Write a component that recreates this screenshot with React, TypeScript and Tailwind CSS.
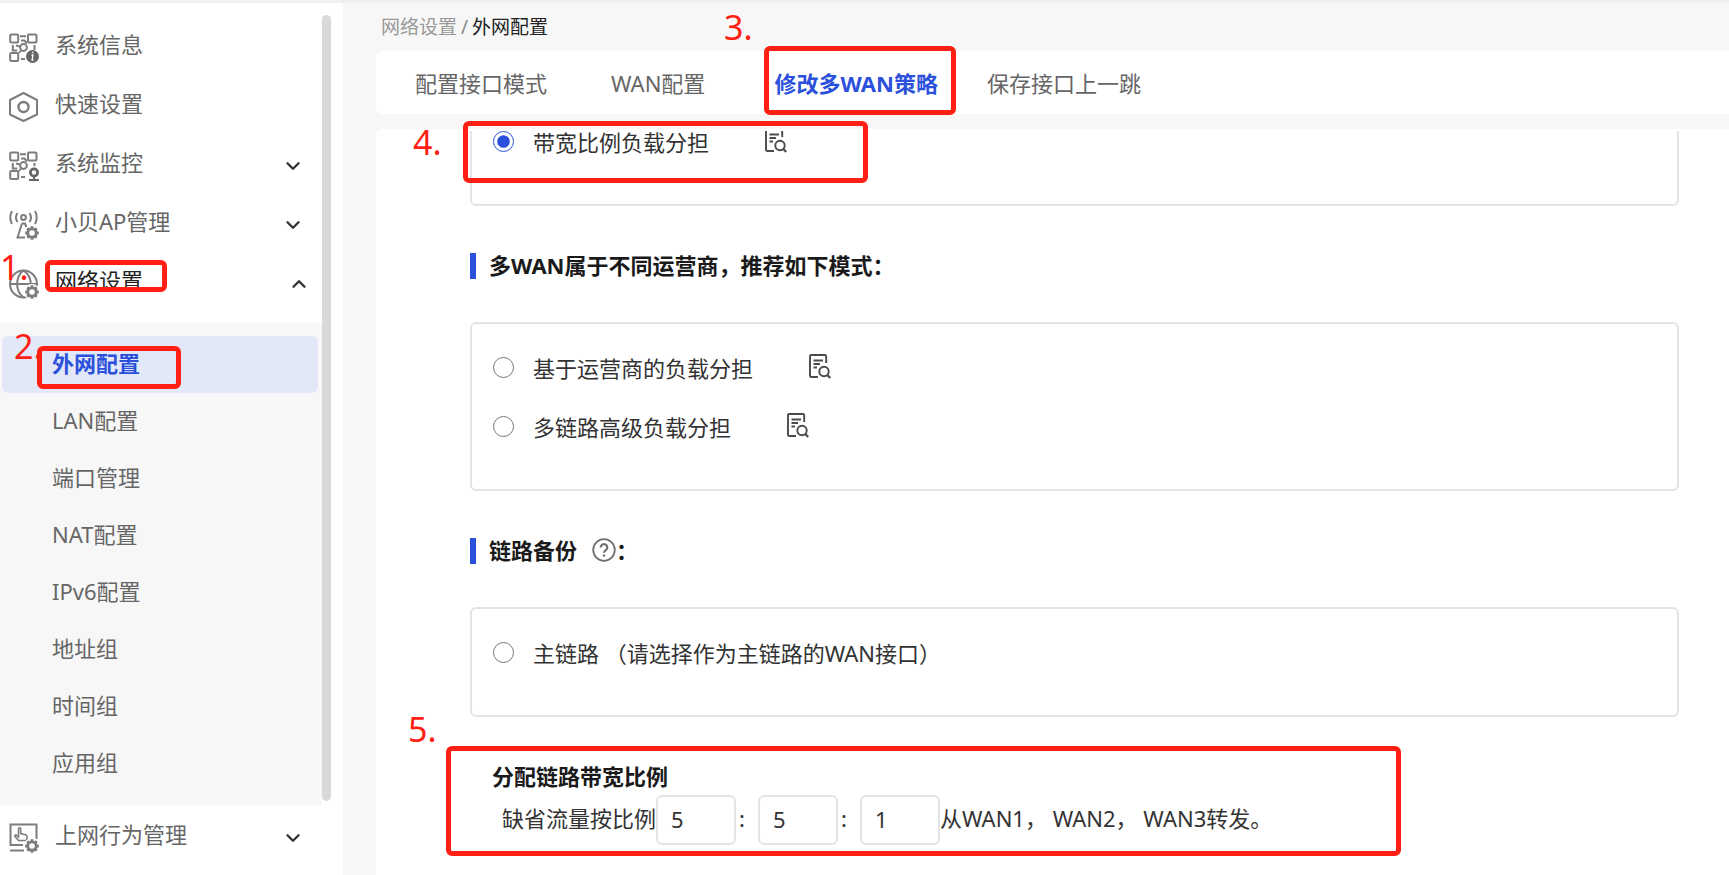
import { useState } from "react";
import type { ReactNode } from "react";
import { ChevronDown, ChevronUp } from "lucide-react";

interface MenuItem {
  label: string;
  icon: ReactNode;
  expandable?: boolean;
}

const GearBadge = () => (
  <g>
    <circle cx="23" cy="23" r="8" fill="#fff" stroke="none" />
    <circle cx="23" cy="23" r="4.2" strokeWidth="2.8" />
    <path
      d="M23 16.2v2M23 27.8v2M16.2 23h2M27.8 23h2M18.3 18.3l1.4 1.4M26.3 26.3l1.4 1.4M18.3 27.7l1.4-1.4M26.3 19.7l1.4-1.4"
      strokeWidth="2.8"
    />
  </g>
);

const GridBase = () => (
  <g>
    <rect x="1.2" y="1.5" width="8" height="8" rx="1" />
    <rect x="19" y="1.5" width="8.5" height="8" rx="1" />
    <rect x="1.2" y="20" width="8" height="8" rx="1" />
    <circle cx="14.5" cy="14.5" r="3.4" />
    <path d="M11 3.2h6M12 7.5h3.5l2.5 3M3.8 12v5.5h4.5M7 12.5l4 1M25.5 12v5M12 26h4M10 20l2-2.5" />
  </g>
);

const MenuIcon = ({ children }: { children: ReactNode }) => (
  <svg
    viewBox="0 0 30 30"
    className="h-[30px] w-[30px] shrink-0"
    fill="none"
    stroke="#7d7d7d"
    strokeWidth="2"
    aria-hidden="true"
  >
    {children}
  </svg>
);

const topItems: MenuItem[] = [
  {
    label: "系统信息",
    icon: (
      <MenuIcon>
        <GridBase />
        <circle cx="23.5" cy="23.5" r="6.5" fill="#666" stroke="none" />
        <path d="M22.5 22h1.4l-.8 5h1.4M23.8 18.8v1.4" stroke="#fff" strokeWidth="1.3" />
      </MenuIcon>
    ),
  },
  {
    label: "快速设置",
    icon: (
      <MenuIcon>
        <path d="M14.5 1 28 8v14.5L14.5 29 1 22.5V8Z" strokeLinejoin="round" />
        <circle cx="14.5" cy="15" r="5" strokeWidth="2.4" />
      </MenuIcon>
    ),
  },
  {
    label: "系统监控",
    expandable: true,
    icon: (
      <MenuIcon>
        <GridBase />
        <circle cx="25" cy="21.5" r="6.5" fill="#fff" stroke="none" />
        <circle cx="25" cy="21.5" r="3.6" stroke="#666" strokeWidth="2.8" />
        <path d="M25 25v4M20 29h10" stroke="#666" strokeWidth="2.2" />
      </MenuIcon>
    ),
  },
  {
    label: "小贝AP管理",
    expandable: true,
    icon: (
      <MenuIcon>
        <circle cx="14.5" cy="7.5" r="2.4" />
        <path d="M8.5 3a8 8 0 0 0 0 9M3 1a14 14 0 0 0 0 13M20.5 3a8 8 0 0 1 0 9M26 1a14 14 0 0 1 0 13" />
        <path d="M13 13.5 8.5 27.5H16M13 13.5h3l1.5 3.5" />
        <GearBadge />
      </MenuIcon>
    ),
  },
  {
    label: "网络设置",
    expandable: true,
    icon: (
      <MenuIcon>
        <circle cx="14.5" cy="15" r="13.5" />
        <path d="M14.5 1.5C6 8 6 22 14.5 28.5M14.5 1.5C21 6 22 12 21.5 16M1 15h27" />
        <GearBadge />
      </MenuIcon>
    ),
  },
];

const behaviourItem: MenuItem = {
  label: "上网行为管理",
  expandable: true,
  icon: (
    <MenuIcon>
      <path d="M14 22H1.5V1.5h26V16M1 27.5h14" />
      <path
        d="M9.5 17.5 6 13.5c-.8-1.4.8-2 1.6-1.2L9.5 14V6c0-1.6 2.2-1.6 2.2 0v4.5l5 1.2c1.3.4 1.6 1.2 1.4 2.3l-.6 3.5Z"
        strokeWidth="1.6"
      />
      <GearBadge />
    </MenuIcon>
  ),
};

const subItems = [
  "外网配置",
  "LAN配置",
  "端口管理",
  "NAT配置",
  "IPv6配置",
  "地址组",
  "时间组",
  "应用组",
];

const tabs = ["配置接口模式", "WAN配置", "修改多WAN策略", "保存接口上一跳"];

const DocSearchIcon = () => (
  <svg
    viewBox="0 0 22 25"
    className="h-[25px] w-[22px]"
    fill="none"
    stroke="#4a4a4a"
    strokeWidth="1.9"
    aria-hidden="true"
  >
    <path d="M17.2 9V2.2A1.2 1.2 0 0 0 16 1H2.2A1.2 1.2 0 0 0 1 2.2v19.6A1.2 1.2 0 0 0 2.2 23H9" />
    <path d="M4.5 6.5H14M4.500 10H11M4.500 13.500H8" />
    <circle cx="15" cy="17.5" r="4.7" />
    <path d="m18.3 21 3 3" strokeWidth="2.2" />
  </svg>
);

const Mark = ({ className, children }: { className: string; children: ReactNode }) => (
  <span
    className={`pointer-events-none absolute z-10 text-[34px] leading-[34px] text-[#ff2013] ${className}`}
  >
    {children}
  </span>
);

const RedBox = ({ className }: { className: string }) => (
  <span
    className={`pointer-events-none absolute z-10 rounded-md border-5 border-[#ff2013] ${className}`}
  />
);

interface MenuRowProps {
  item: MenuItem;
  open?: boolean;
  children?: ReactNode;
}

const MenuRow = ({ item, open, children }: MenuRowProps) => (
  <div className="relative">
    <button
      type="button"
      className={`flex h-[59px] w-full items-center pl-[9px] text-left ${
        open ? "pr-3 text-[#222]" : "pr-[18px] text-[#666]"
      }`}
    >
      {item.icon}
      <span className="ml-4 flex-1 pb-2">{item.label}</span>
      {item.expandable &&
        (open ? (
          <ChevronUp size={22} strokeWidth={2.6} color="#333" />
        ) : (
          <ChevronDown size={22} strokeWidth={2.6} color="#333" />
        ))}
    </button>
    {children}
  </div>
);

interface PolicyOptionProps {
  value: string;
  label: string;
  selected: string;
  onSelect: (value: string) => void;
  preview?: boolean;
}

const PolicyOption = ({ value, label, selected, onSelect, preview }: PolicyOptionProps) => (
  <div className="flex h-[59px] items-center">
    <input
      type="radio"
      id={value}
      name="policy"
      checked={selected === value}
      onChange={() => onSelect(value)}
      className="h-[21px] w-[21px] accent-[#2b50db]"
    />
    <label htmlFor={value} className="pl-[19px] leading-5">
      {label}
    </label>
    {preview && (
      <button type="button" aria-label={`${label} 详情`} className="ml-14 pb-[3px]">
        <DocSearchIcon />
      </button>
    )}
  </div>
);

const OptionGroup = ({ children }: { children: ReactNode }) => (
  <div className="rounded-md border-2 border-[#e4e4e4] pt-[14px] pb-[33px] pl-[21px]">
    {children}
  </div>
);

const SectionTitle = ({ children }: { children: ReactNode }) => (
  <h2 className="mt-[47px] mb-[43px] flex h-[26px] items-center border-l-[6px] border-[#2b50db] pb-0.5 pl-[13px] font-bold text-[#1a1a1a]">
    {children}
  </h2>
);

const App = () => {
  const [policy, setPolicy] = useState("bandwidth");
  const [ratios, setRatios] = useState(["5", "5", "1"]);

  const updateRatio = (index: number, value: string) => {
    setRatios((prev) => prev.map((ratio, i) => (i === index ? value : ratio)));
  };

  return (
    <div
      lang="zh-CN"
      className="flex h-screen overflow-hidden border-t-[3px] border-[#f0f0f0] bg-[#f7f7f7] font-['Noto_Sans','Noto_Sans_CJK_SC',sans-serif] text-[22px] leading-[30px] text-[#333]"
    >
      <aside className="relative w-[343px] shrink-0 bg-white pt-[15px] pr-[21px]">
        {topItems.map((item) => (
          <MenuRow key={item.label} item={item} open={item.label === "网络设置"}>
            {item.label === "网络设置" && (
              <>
                <Mark className="-top-1 left-0">1.</Mark>
                <RedBox className="top-[6px] left-[45px] h-8 w-[122px]" />
              </>
            )}
          </MenuRow>
        ))}
        <nav className="mt-[10px] bg-[#f7f7f7] py-[13px]">
          {subItems.map((label, index) => (
            <div key={label} className="relative pr-1 pl-0.5">
              <a
                href="#"
                className={`flex h-[57px] items-center rounded-md pb-[3px] pl-[50px] ${
                  index === 0 ? "bg-[#e3e8f8] font-bold text-[#2b50db]" : "text-[#666]"
                }`}
              >
                {label}
              </a>
              {index === 0 && (
                <>
                  <Mark className="-top-[7px] left-[14px]">2.</Mark>
                  <RedBox className="top-[10px] left-[37px] h-[43px] w-36" />
                </>
              )}
            </div>
          ))}
        </nav>
        <div className="pt-[3px]">
          <MenuRow item={behaviourItem} />
        </div>
        <div className="absolute top-3 right-3 bottom-[74px] w-[9px] rounded-full bg-[#d9d9d9]" />
      </aside>

      <main className="flex min-w-0 flex-1 flex-col pl-[33px]">
        <div className="relative flex h-12 items-center pl-[5px] text-[19px]">
          <a href="#" className="text-[#999]">
            网络设置
          </a>
          <span className="px-1 text-[#888]">/</span>
          <span className="text-[#222]">外网配置</span>
          <Mark className="top-[7px] left-[348px]">3.</Mark>
        </div>

        <div className="flex h-[63px] items-center gap-16 rounded-l-md bg-white pl-[39px]">
          {tabs.map((tab, index) => (
            <div key={tab} className={index === 2 ? "relative -mr-5 px-[5px]" : ""}>
              <button
                type="button"
                className={index === 2 ? "font-bold text-[#2b50db]" : "text-[#666]"}
              >
                {tab}
              </button>
              {index === 2 && <RedBox className="-top-[22px] -right-[13px] -left-[5px] h-[69px]" />}
            </div>
          ))}
        </div>

        <div className="relative mt-[15px] min-h-0 flex-1 rounded-tl-md bg-white pt-0.5">
          <Mark className="-top-[4px] left-[37px]">4.</Mark>
          <RedBox className="-top-2 left-[87px] h-[62px] w-[405px]" />

          <div className="h-full overflow-hidden pr-[50px] pl-[94px]">
            {/* scrolled so the first group starts above the visible area */}
            <div className="-mt-[35px]">
              <OptionGroup>
                <PolicyOption
                  value="bandwidth"
                  label="带宽比例负载分担"
                  selected={policy}
                  onSelect={setPolicy}
                  preview
                />
              </OptionGroup>
            </div>

            <SectionTitle>多WAN属于不同运营商，推荐如下模式：</SectionTitle>
            <OptionGroup>
              <PolicyOption
                value="isp"
                label="基于运营商的负载分担"
                selected={policy}
                onSelect={setPolicy}
                preview
              />
              <PolicyOption
                value="advanced"
                label="多链路高级负载分担"
                selected={policy}
                onSelect={setPolicy}
                preview
              />
            </OptionGroup>

            <SectionTitle>
              链路备份
              <svg
                viewBox="0 0 24 24"
                className="ml-[15px] h-6 w-6"
                fill="none"
                stroke="#707070"
                strokeWidth="1.8"
                aria-hidden="true"
              >
                <circle cx="12" cy="12" r="10.8" />
                <path
                  d="M8.7 9.5a3.3 3.3 0 1 1 5.2 2.7c-1.2.8-1.9 1.3-1.9 2.6"
                  strokeWidth="2.2"
                />
                <path d="M12 16.5v2.2" strokeWidth="2.2" />
              </svg>
              ：
            </SectionTitle>
            <OptionGroup>
              <PolicyOption
                value="primary"
                label="主链路 （请选择作为主链路的WAN接口）"
                selected={policy}
                onSelect={setPolicy}
              />
            </OptionGroup>

            <section className="relative mt-11 pl-[22px]">
              <Mark className="-top-[49px] -left-[62px]">5.</Mark>
              <RedBox className="-top-[15px] -left-6 h-[110px] w-[955px]" />
              <h3 className="font-bold text-[#1a1a1a]">分配链路带宽比例</h3>
              <div className="mt-1 flex items-center pl-[10px]">
                <span className="pb-1">缺省流量按比例</span>
                {ratios.map((ratio, index) => (
                  <div key={index} className="flex items-center">
                    {index > 0 && <span className="w-[22px] pb-1 pl-[3px]">:</span>}
                    <input
                      type="text"
                      aria-label={`WAN${index + 1}比例`}
                      value={ratio}
                      onChange={(event) => updateRatio(index, event.target.value)}
                      className="h-[50px] w-20 rounded-md border-2 border-[#e4e4e4] pb-0.5 pl-[13px]"
                    />
                  </div>
                ))}
                <span className="pb-1">从WAN1， WAN2， WAN3转发。</span>
              </div>
            </section>
          </div>
        </div>
      </main>
    </div>
  );
};

export default App;
